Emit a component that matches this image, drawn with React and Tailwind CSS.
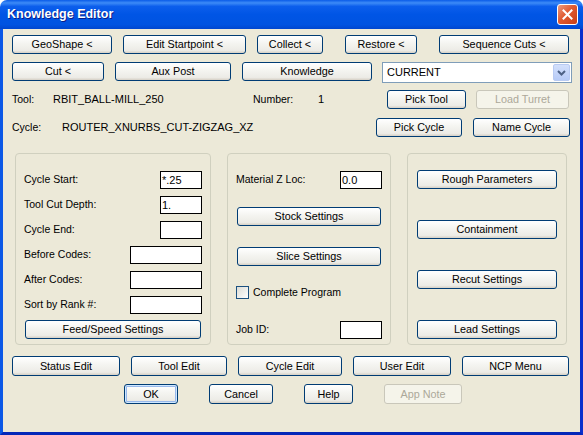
import React from "react";

const Btn = ({ className = "", tall, disabled, def, children }) => {
  const base = `${tall ? "h-[20px]" : "h-[19px]"} shrink-0 flex items-center justify-center rounded-[3px] border text-[10.8px] leading-none`;
  const look = disabled
    ? "border-[#C9C7BA] bg-[#F5F4EA] text-[#ACA899]"
    : def
    ? "border-[#003C74] bg-[linear-gradient(to_bottom,#FFFFFF,#F4F4F0_45%,#ECEBE6_85%,#D6D0C5)] text-black shadow-[inset_0_0_0_1px_#CEE7FF,inset_0_0_0_2px_#98B8EA]"
    : "border-[#003C74] bg-[linear-gradient(to_bottom,#FFFFFF,#F4F4F0_45%,#ECEBE6_85%,#D6D0C5)] text-black";
  return <div className={`${base} ${look} ${className}`}>{children}</div>;
};

const Field = ({ className = "", value }) => (
  <div
    className={`h-[18px] border border-black bg-white text-[11px] leading-[16px] pl-[1px] ${className}`}
  >
    {value}
  </div>
);

const Row = ({ label, wide, value }) => (
  <div className="flex items-center justify-between h-[18px]">
    <span>{label}</span>
    <Field className={wide ? "w-[72px]" : "w-[42px]"} value={value} />
  </div>
);

export default function App() {
  return (
    <div className="w-[583px] h-[435px] flex flex-col font-['Liberation_Sans',Arial,sans-serif] text-[10.5px] text-black select-none">
      {/* title bar */}
      <div className="h-[29px] shrink-0 flex items-center justify-between rounded-t-[7px] bg-[linear-gradient(to_bottom,#0A5BE8,#3D8BF7_10%,#0C5EEC_22%,#0055E5_50%,#0053E1_85%,#0046CF)] pl-[7px] pr-[5px]">
        <span className="text-white font-bold text-[12.5px] [text-shadow:1px_1px_#0B1C86]">
          Knowledge Editor
        </span>
        <div className="w-[21px] h-[21px] rounded-[3px] border border-white bg-[linear-gradient(135deg,#EC9B80,#E05A32_45%,#C73E16)] flex items-center justify-center">
          <svg width="11" height="11" viewBox="0 0 11 11">
            <path d="M1.5 1.5 L9.5 9.5 M9.5 1.5 L1.5 9.5" stroke="#fff" strokeWidth="2" strokeLinecap="square" />
          </svg>
        </div>
      </div>

      {/* body */}
      <div className="flex-1 bg-[#ECE9D8] border-l-[3px] border-l-[#0B58E6] border-r-[3px] border-r-[#0A2ECC] border-b-[3px] border-b-[#0427B8] pl-[9px] pt-[6px]">
        <div className="flex">
          <Btn className="w-[100px]">GeoShape &lt;</Btn>
          <Btn className="w-[123px] ml-[11px]">Edit Startpoint &lt;</Btn>
          <Btn className="w-[66px] ml-[11px]">Collect &lt;</Btn>
          <Btn className="w-[72px] ml-[22px]">Restore &lt;</Btn>
          <Btn className="w-[130px] ml-[22px]">Sequence Cuts &lt;</Btn>
        </div>

        <div className="flex mt-[8px]">
          <Btn className="w-[92px]">Cut &lt;</Btn>
          <Btn className="w-[116px] ml-[11px]">Aux Post</Btn>
          <Btn className="w-[130px] ml-[11px]">Knowledge</Btn>
          <div className="w-[190px] h-[21px] ml-[10px] border border-[#7F9DB9] bg-white flex items-center justify-between p-[1px]">
            <span className="pl-[3px] text-[11px]">CURRENT</span>
            <div className="w-[17px] h-full rounded-[2px] border border-[#B9CBF3] bg-[linear-gradient(to_bottom,#D3E0FC,#B7CBF7)] flex items-center justify-center">
              <svg width="9" height="6" viewBox="0 0 9 6">
                <path d="M1 1 L4.5 4.5 L8 1" fill="none" stroke="#4D6185" strokeWidth="2" />
              </svg>
            </div>
          </div>
        </div>

        <div className="flex items-center mt-[7px] h-[19px]">
          <span className="w-[41px] shrink-0">Tool:</span>
          <span className="w-[200px] shrink-0 text-[11px]">RBIT_BALL-MILL_250</span>
          <span className="w-[65px] shrink-0">Number:</span>
          <span className="w-[69px] shrink-0 text-[11px]">1</span>
          <Btn className="w-[79px]">Pick Tool</Btn>
          <Btn className="w-[93px] ml-[10px]" disabled>
            Load Turret
          </Btn>
        </div>

        <div className="flex items-center mt-[9px] h-[19px]">
          <span className="w-[50px] shrink-0">Cycle:</span>
          <span className="w-[314px] shrink-0 text-[11px]">ROUTER_XNURBS_CUT-ZIGZAG_XZ</span>
          <Btn className="w-[86px]">Pick Cycle</Btn>
          <Btn className="w-[97px] ml-[11px]">Name Cycle</Btn>
        </div>

        {/* group boxes */}
        <div className="flex mt-[16px]">
          <div className="w-[196px] h-[192px] ml-[3px] border border-[#D0D0BF] rounded-[4px] pt-[17px] px-[8px]">
            <div className="flex flex-col gap-[7px]">
              <Row label="Cycle Start:" value="*.25" />
              <Row label="Tool Cut Depth:" value="1." />
              <Row label="Cycle End:" />
              <Row label="Before Codes:" wide />
              <Row label="After Codes:" wide />
              <Row label="Sort by Rank #:" wide />
            </div>
            <Btn className="w-[176px] ml-[1px] mt-[6px]">Feed/Speed Settings</Btn>
          </div>

          <div className="w-[164px] h-[192px] ml-[16px] border border-[#D0D0BF] rounded-[4px] pt-[17px] px-[8px]">
            <div className="flex items-center justify-between h-[18px]">
              <span>Material Z Loc:</span>
              <Field className="w-[42px]" value="0.0" />
            </div>
            <Btn className="w-[144px] ml-[1px] mt-[18px]">Stock Settings</Btn>
            <Btn className="w-[144px] ml-[1px] mt-[21px]">Slice Settings</Btn>
            <div className="flex items-center mt-[20px] h-[13px]">
              <div className="w-[13px] h-[13px] border border-[#1C5180] bg-[linear-gradient(135deg,#DCDCD5,#FFFFFF)]" />
              <span className="ml-[4px]">Complete Program</span>
            </div>
            <div className="flex items-center justify-between h-[18px] mt-[22px]">
              <span>Job ID:</span>
              <Field className="w-[42px]" />
            </div>
          </div>

          <div className="w-[160px] h-[192px] ml-[16px] border border-[#D0D0BF] rounded-[4px] pt-[16px] pl-[9px] flex flex-col gap-[31px]">
            <Btn className="w-[140px]">Rough Parameters</Btn>
            <Btn className="w-[140px]">Containment</Btn>
            <Btn className="w-[140px]">Recut Settings</Btn>
            <Btn className="w-[140px]">Lead Settings</Btn>
          </div>
        </div>

        <div className="flex mt-[11px]">
          <Btn tall className="w-[108px]">Status Edit</Btn>
          <Btn tall className="w-[96px] ml-[11px]">Tool Edit</Btn>
          <Btn tall className="w-[104px] ml-[11px]">Cycle Edit</Btn>
          <Btn tall className="w-[98px] ml-[11px]">User Edit</Btn>
          <Btn tall className="w-[107px] ml-[11px]">NCP Menu</Btn>
        </div>

        <div className="flex mt-[8px] ml-[112px]">
          <Btn tall className="w-[54px]" def>
            OK
          </Btn>
          <Btn tall className="w-[64px] ml-[31px]">Cancel</Btn>
          <Btn tall className="w-[49px] ml-[31px]">Help</Btn>
          <Btn tall className="w-[78px] ml-[31px]" disabled>
            App Note
          </Btn>
        </div>
      </div>
    </div>
  );
}
